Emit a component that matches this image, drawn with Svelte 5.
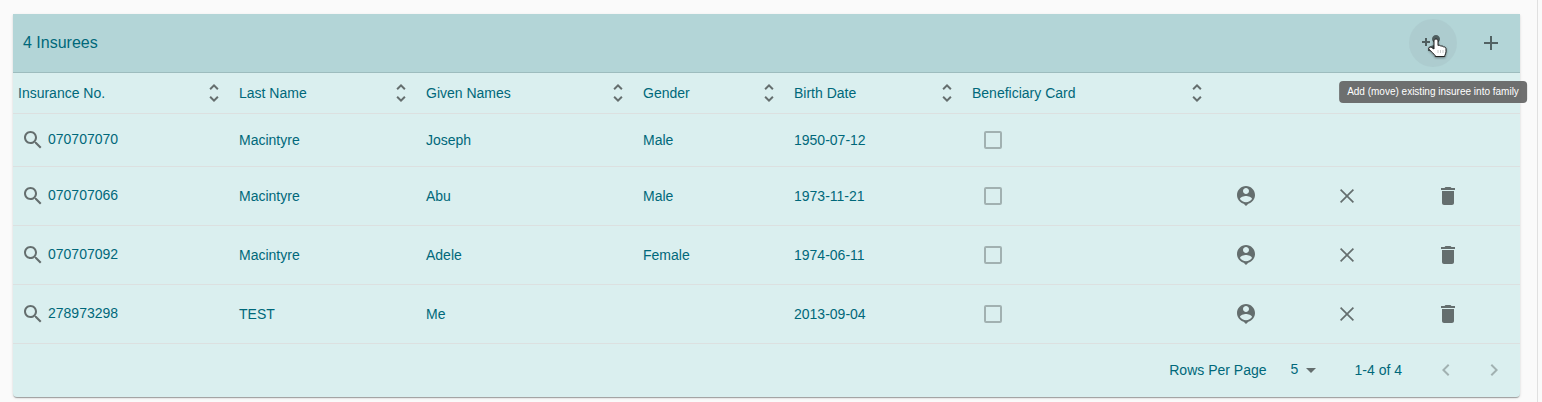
<script>
  const columns = [
    { label: 'Insurance No.', width: 221 },
    { label: 'Last Name', width: 187 },
    { label: 'Given Names', width: 217 },
    { label: 'Gender', width: 151 },
    { label: 'Birth Date', width: 178 },
    { label: 'Beneficiary Card', width: 250 },
  ];

  const rows = [
    { no: '070707070', last: 'Macintyre', given: 'Joseph', gender: 'Male', birth: '1950-07-12', head: true },
    { no: '070707066', last: 'Macintyre', given: 'Abu', gender: 'Male', birth: '1973-11-21', head: false },
    { no: '070707092', last: 'Macintyre', given: 'Adele', gender: 'Female', birth: '1974-06-11', head: false },
    { no: '278973298', last: 'TEST', given: 'Me', gender: '', birth: '2013-09-04', head: false },
  ];

  const icons = {
    personAdd: 'M15 12c2.21 0 4-1.79 4-4s-1.79-4-4-4-4 1.79-4 4 1.79 4 4 4zm-9-2V7H4v3H1v2h3v3h2v-3h3v-2H6zm9 4c-2.67 0-8 1.34-8 4v2h16v-2c0-2.66-5.33-4-8-4z',
    add: 'M19 13h-6v6h-2v-6H5v-2h6V5h2v6h6v2z',
    sort: 'M12 5.83L15.17 9l1.41-1.41L12 3 7.41 7.59 8.83 9 12 5.83zm0 12.34L8.83 15l-1.41 1.41L12 21l4.59-4.59L15.17 15 12 18.17z',
    search: 'M15.5 14h-.79l-.28-.27C15.41 12.59 16 11.11 16 9.5 16 5.91 13.09 3 9.5 3S3 5.91 3 9.5 5.91 16 9.5 16c1.61 0 3.09-.59 4.23-1.57l.27.28v.79l5 4.99L20.49 19l-4.99-5zm-6 0C7.01 14 5 11.99 5 9.5S7.01 5 9.5 5 14 7.01 14 9.5 11.99 14 9.5 14z',
    pin: 'M12 2c-4.97 0-9 4.03-9 9 0 4.17 2.84 7.67 6.69 8.69L12 22l2.31-2.31C18.16 18.67 21 15.17 21 11c0-4.97-4.03-9-9-9zm0 2c1.66 0 3 1.34 3 3s-1.34 3-3 3-3-1.34-3-3 1.34-3 3-3zm0 14.3c-2.5 0-4.71-1.28-6-3.22.03-1.99 4-3.08 6-3.08 1.99 0 5.97 1.09 6 3.08-1.29 1.94-3.5 3.22-6 3.22z',
    close: 'M19 6.2L17.8 5 12 10.8 6.2 5 5 6.2 10.8 12 5 17.8 6.2 19 12 13.2 17.8 19 19 17.8 13.2 12z',
    trash: 'M6 19c0 1.1.9 2 2 2h8c1.1 0 2-.9 2-2V7H6v12zM19 4h-3.5l-1-1h-5l-1 1H5v2h14V4z',
    caret: 'M7 10l5 5 5-5z',
    prev: 'M15.41 7.41L14 6l-6 6 6 6 1.41-1.41L10.83 12z',
    next: 'M10 6L8.59 7.41 13.17 12l-4.58 4.59L10 18l6-6z',
  };

  const actions = [
    { label: 'Set as head of family', icon: 'pin' },
    { label: 'Remove from family', icon: 'close' },
    { label: 'Delete', icon: 'trash' },
  ];
</script>

{#snippet icon(name)}
  <svg class="icon" viewBox="0 0 24 24" aria-hidden="true"><path d={icons[name]} /></svg>
{/snippet}

<main class="page">
  <section class="card">
    <header class="bar">
      <h2>4 Insurees</h2>
      <div class="tools">
        <div class="tip-host">
          <button class="icon-button hovered" aria-label="Add existing insuree" aria-describedby="move-tip">
            {@render icon('personAdd')}
          </button>
          <svg class="pointer" viewBox="0 0 20 20" aria-hidden="true">
            <path
              d="M9 1c1.100 0 2 .9 2 2v4.500c1-.6 2.400-.2 2.800.7 1-.5 2.300-.1 2.600.8 1.300-.4 2.600.3 2.600 1.800v3c0 1.600-.8 2.500-1.200 3.700v1H8.200v-1c-1.500-1.500-3.700-4-6-6-1.200-1.300.3-3.200 2.200-2.100L7 11V3c0-1.100.9-2 2-2z"
            />
            <path class="fingers" d="M11 12v3M13.500 12v3M16 12v3" />
          </svg>
          <div class="tooltip" id="move-tip" role="tooltip">Add (move) existing insuree into family</div>
        </div>
        <button class="icon-button" aria-label="Add new insuree">{@render icon('add')}</button>
      </div>
    </header>

    <table>
      <colgroup>
        {#each columns as column}
          <col style:width="{column.width}px" />
        {/each}
        {#each actions as _}
          <col class="action-col" />
        {/each}
      </colgroup>
      <thead>
        <tr>
          {#each columns as column}
            <th scope="col">
              <div class="heading">
                {column.label}
                <button class="sort" aria-label="Sort by {column.label}">{@render icon('sort')}</button>
              </div>
            </th>
          {/each}
          {#each actions as _}
            <td></td>
          {/each}
        </tr>
      </thead>
      <tbody>
        {#each rows as row}
          <tr>
            <td>
              <div class="number">
                <button class="sort" aria-label="Open {row.no}">{@render icon('search')}</button>
                <span>{row.no}</span>
              </div>
            </td>
            <td>{row.last}</td>
            <td>{row.given}</td>
            <td>{row.gender}</td>
            <td>{row.birth}</td>
            <td><input type="checkbox" disabled aria-label="Beneficiary card for {row.no}" /></td>
            {#each actions as action}
              <td>
                {#if !row.head}
                  <button class="icon-button" aria-label="{action.label} {row.no}">{@render icon(action.icon)}</button>
                {/if}
              </td>
            {/each}
          </tr>
        {/each}
      </tbody>
    </table>

    <footer>
      <label for="page-size">Rows Per Page</label>
      <div class="select">
        <select id="page-size">
          <option>5</option>
          <option>10</option>
          <option>20</option>
        </select>
        {@render icon('caret')}
      </div>
      <span class="range">1-4 of 4</span>
      <button class="icon-button" disabled aria-label="Previous page">{@render icon('prev')}</button>
      <button class="icon-button" disabled aria-label="Next page">{@render icon('next')}</button>
    </footer>
  </section>
</main>

<style>
  :global(body) {
    margin: 0;
    background: #fafafa;
  }

  .page {
    box-sizing: border-box;
    min-height: 100vh;
    margin-right: 4px;
    padding: 14px 17px 5px 13px;
    border-right: 1px solid #e0e0e0;
    color: #00687a;
    font-family: "Liberation Sans", Arial, sans-serif;
    font-size: 14px;
    line-height: 20px;
  }

  .card {
    border-radius: 0 0 4px 4px;
    background: #daefef;
    box-shadow:
      0 2px 1px -1px rgba(0, 0, 0, 0.2),
      0 1px 1px 0 rgba(0, 0, 0, 0.14),
      0 1px 3px 0 rgba(0, 0, 0, 0.12);
  }

  .bar {
    display: flex;
    align-items: center;
    justify-content: space-between;
    padding: 5px 5px 5px 10px;
    border-bottom: 1px solid #9dbcbe;
    background: #b3d5d7;
  }

  h2 {
    margin: 0;
    font-size: 16px;
    font-weight: 400;
  }

  .tools {
    display: flex;
    gap: 10px;
  }

  .tip-host {
    position: relative;
  }

  button {
    display: flex;
    flex: none;
    padding: 0;
    border: 0;
    background: none;
    color: rgba(0, 0, 0, 0.54);
    cursor: pointer;
  }

  button:disabled {
    color: rgba(0, 0, 0, 0.26);
    cursor: default;
  }

  .icon {
    display: block;
    flex: none;
    width: 24px;
    height: 24px;
    fill: currentColor;
  }

  .icon-button {
    padding: 12px;
    border-radius: 50%;
  }

  .hovered {
    background: rgba(140, 160, 165, 0.16);
  }

  .pointer {
    position: absolute;
    top: 19px;
    left: 18px;
    width: 20px;
    height: 20px;
    fill: #fff;
    stroke: #222;
    stroke-linejoin: round;
    filter: drop-shadow(0 1px 1px rgba(0, 0, 0, 0.4));
    pointer-events: none;
  }

  .pointer .fingers {
    stroke: #ccc;
  }

  .tooltip {
    position: absolute;
    top: 62px;
    left: 50%;
    z-index: 1;
    padding: 4px 8px;
    border-radius: 4px;
    background: rgba(97, 97, 97, 0.9);
    color: #fff;
    font-size: 10px;
    line-height: 14px;
    white-space: nowrap;
    transform: translateX(-50%);
  }

  table {
    width: 100%;
    border-collapse: separate;
    border-spacing: 0;
    table-layout: fixed;
  }

  .action-col {
    width: 101px;
  }

  th,
  td {
    padding: 5px;
    border-bottom: 1px solid #dce0e0;
    font-weight: 400;
    text-align: left;
    vertical-align: middle;
  }

  thead tr {
    height: 41px;
  }

  tbody tr {
    height: 53px;
  }

  .heading {
    display: flex;
    align-items: center;
    justify-content: space-between;
    padding-right: 3px;
  }

  .number {
    display: flex;
    align-items: center;
    gap: 3px;
    padding-left: 3px;
  }

  .number span {
    padding-bottom: 2px;
  }

  input[type='checkbox'] {
    display: block;
    box-sizing: border-box;
    width: 18px;
    height: 18px;
    margin: 0 12px;
    border: 2px solid rgba(0, 0, 0, 0.26);
    border-radius: 2px;
    appearance: none;
  }

  footer {
    display: flex;
    align-items: center;
    justify-content: flex-end;
    padding: 2px 2px 3px;
  }

  .select {
    display: grid;
    position: relative;
    align-items: center;
    margin: 0 32px 0 16px;
  }

  select {
    display: block;
    width: 40px;
    padding: 0 24px 2px 8px;
    border: 0;
    background: none;
    color: inherit;
    font: inherit;
    appearance: none;
  }

  .select .icon {
    position: absolute;
    right: 0;
    color: rgba(0, 0, 0, 0.54);
    pointer-events: none;
  }

  .range {
    margin-right: 20px;
  }
</style>
